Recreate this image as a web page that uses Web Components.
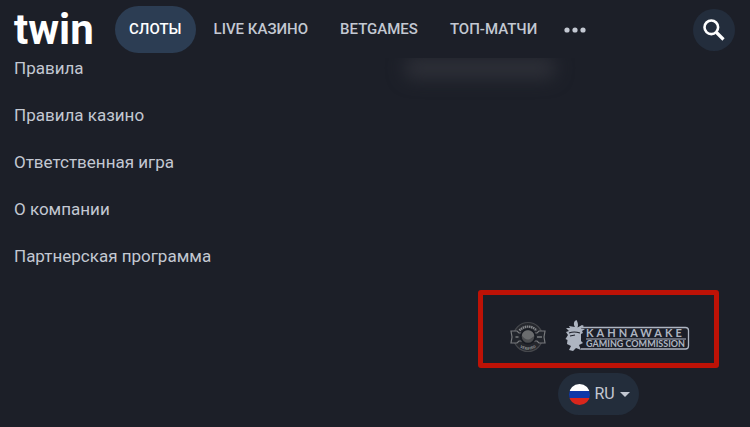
<!DOCTYPE html>
<html lang="ru">
<head>
<meta charset="utf-8">
<meta name="viewport" content="width=device-width, initial-scale=1">
<title>Twin</title>
<style>
    body {
        margin: 0;
        background: #1c1f28;
        color: #c3c8d2;
        font: 16px/20px Roboto, "Liberation Sans", sans-serif;
    }
</style>
</head>
<body>
<twin-header>
    <twin-logo slot="logo"></twin-logo>
    <nav-item active>СЛОТЫ</nav-item>
    <nav-item>LIVE КАЗИНО</nav-item>
    <nav-item>BETGAMES</nav-item>
    <nav-item>ТОП-МАТЧИ</nav-item>
</twin-header>
<twin-footer>
    <footer-link>Правила</footer-link>
    <footer-link>Правила казино</footer-link>
    <footer-link>Ответственная игра</footer-link>
    <footer-link>О компании</footer-link>
    <footer-link>Партнерская программа</footer-link>
    <license-box slot="license"></license-box>
    <lang-switch slot="license">RU</lang-switch>
</twin-footer>

<script>
class BaseElement extends HTMLElement {
    constructor() {
        super();

        const template = document.createElement('template');
        template.innerHTML = this.constructor.markup;

        this.attachShadow({ mode: 'open' });
        this.shadowRoot.appendChild(template.content.cloneNode(true));
    }
}

class TwinHeader extends BaseElement {
    static markup = `
<style>
    :host {
        display: flex;
        align-items: center;
        padding: 6px 15px 5px 14px;
    }
    nav {
        display: flex;
        align-items: center;
        gap: 4px;
        flex: 1;
        margin-left: 20px;
    }
    button {
        display: flex;
        align-items: center;
        justify-content: center;
        border: 0;
        padding: 0;
        background: none;
        color: inherit;
        cursor: pointer;
    }
    .more {
        width: 40px;
        height: 40px;
    }
    .search {
        width: 42px;
        height: 42px;
        border-radius: 50%;
        background: #232d3c;
        color: #fff;
    }
</style>
<slot name="logo"></slot>
<nav>
    <slot></slot>
    <button class="more" aria-label="Ещё">
        <svg width="22" height="6" viewBox="0 0 22 6" fill="currentColor">
            <circle cx="3" cy="3" r="2.6"/><circle cx="11" cy="3" r="2.6"/><circle cx="19" cy="3" r="2.6"/>
        </svg>
    </button>
</nav>
<button class="search" aria-label="Поиск">
    <svg width="24" height="24" viewBox="0 0 24 24" fill="none" stroke="currentColor">
        <circle cx="9.300" cy="9.300" r="6.800" stroke-width="2.600"/>
        <path d="M14.500 14.500l7 7" stroke-width="3.200"/>
    </svg>
</button>
`;
}

class TwinLogo extends BaseElement {
    static markup = `
<style>
    :host {
        display: block;
        width: 81px;
        height: 47px;
    }
    a {
        color: #fff;
        font-size: 42px;
        font-weight: 700;
        line-height: 47px;
        text-decoration: none;
    }
</style>
<a href="#">twin</a>
`;
}

class NavItem extends BaseElement {
    static markup = `
<style>
    :host {
        display: block;
    }
    a {
        display: block;
        padding: 0 14px;
        border-radius: 24px;
        font-size: 15px;
        font-weight: 500;
        line-height: 47px;
        white-space: nowrap;
        color: inherit;
        text-decoration: none;
    }
    :host([active]) a {
        background: #2c3d53;
        color: #fff;
    }
</style>
<a href="#"><slot></slot></a>
`;
}

class TwinFooter extends BaseElement {
    static markup = `
<style>
    :host {
        display: block;
        padding: 0 31px 12px 14px;
    }
    .columns {
        display: grid;
        grid-template-columns: 391fr 314fr;
        overflow: hidden;
    }
    nav {
        display: flex;
        flex-direction: column;
        align-items: flex-start;
        gap: 27px;
    }
    .contact {
        width: 150px;
        height: 20px;
        background: #2f3139;
        border-radius: 8px;
        filter: blur(9px);
    }
    .license {
        display: flex;
        flex-direction: column;
        align-items: center;
        gap: 5px;
        width: fit-content;
        margin: 24px 0 0 auto;
    }
</style>
<div class="columns">
    <nav><slot></slot></nav>
    <div class="contact"></div>
</div>
<div class="license"><slot name="license"></slot></div>
`;
}

class FooterLink extends BaseElement {
    static markup = `
<style>
    :host {
        display: block;
    }
    a {
        display: block;
        color: inherit;
        font-size: 17px;
        line-height: 20px;
        text-decoration: none;
    }
</style>
<a href="#"><slot></slot></a>
`;
}

class LicenseBox extends BaseElement {
    static markup = `
<style>
    :host {
        display: flex;
        align-items: flex-end;
        gap: 19px;
        padding: 25px 24px 9px 27px;
        border: 5px solid #bd1206;
        border-radius: 3px;
    }
    svg {
        display: block;
    }
    .seal text {
        font: 700 4px "Open Sans", sans-serif;
    }
    .name {
        font: 700 11px Lato, sans-serif;
        letter-spacing: 3px;
    }
    .kind {
        font: 700 9px Lato, sans-serif;
    }
</style>
<svg class="seal" width="36" height="34" viewBox="0 0 36 34">
    <circle cx="18" cy="17" r="14.5" fill="#25272d" stroke="#45474c" stroke-width="1.2"/>
    <path d="M9.5 10.5A11.2 11.2 0 0 1 26.500 10.500" fill="none" stroke="#85878b" stroke-width="2.4" stroke-dasharray="1.5 .6"/>
    <path d="M1 11H7L9 13H27L29 11H35L34 17L35 23H29L27 21H9L7 23H1L2 17Z" fill="#22252c" stroke="#77797c" stroke-width="1.2"/>
    <circle cx="18" cy="16.500" r="8" fill="#191c23"/>
    <circle cx="18" cy="16.500" r="6.300" fill="#4b4d50"/>
    <path d="M11.800 15.500A6.300 6.300 0 0 1 24.300 16L20 19Q16 21 11.800 15.500Z" fill="#77797b" opacity=".7"/>
    <path d="M5.500 17h3M27 17h5" stroke="#77797c" stroke-width="1.5"/>
    <path id="arc" d="M6 22A13 13 0 0 0 30 22" fill="none"/>
    <text fill="#8b8d91" text-anchor="middle"><textPath href="#arc" startOffset="50%">VERIFIED</textPath></text>
</svg>
<svg width="125" height="34" viewBox="0 0 125 34" fill="#aeb5c1">
    <path d="M17 7.500H120.500Q123.500 7.500 123.500 10.500V26Q123.500 29 120.500 29H16" fill="none" stroke="#aeb5c1" stroke-width="1.300"/>
    <path transform="translate(0 -1)" d="M10 8C8 5 9 2 11.500 1C13 4 13.500 6 12.500 8.500L17 6L19 7L16 9.500L20 10L17 12L18 14L16 15L16 22L18 24L14 26L16 31L11 29L8 32L4 31L6 27L2 25L2.500 21L.500 20L3 16L1 13L4 12L1 9L5 9L4 7Z"/>
    <path d="M4 13Q9 11 15 13M5 16l5-1" fill="none" stroke="#1c1f28" stroke-width="1.100"/>
    <path d="M21 19H121" stroke="#aeb5c1"/>
    <text class="name" x="21" y="17">KAHNAWAKE</text>
    <text class="kind" x="21" y="27">GAMING COMMISSION</text>
</svg>
`;
}

class LangSwitch extends BaseElement {
    static markup = `
<style>
    :host {
        display: block;
    }
    button {
        display: flex;
        align-items: center;
        gap: 4px;
        height: 42px;
        padding: 0 9px 0 11px;
        border: 0;
        border-radius: 21px;
        background: #232d3b;
        color: inherit;
        font: inherit;
        cursor: pointer;
    }
    .flag {
        width: 21px;
        height: 21px;
        border-radius: 50%;
        background: linear-gradient(#fff 33%, #0d38a8 33% 66%, #d8261c 66%);
    }
    svg {
        margin-left: 1px;
    }
</style>
<button aria-label="Язык">
    <span class="flag"></span>
    <slot></slot>
    <svg width="10" height="5" viewBox="0 0 10 5" fill="currentColor"><path d="M0 0h10L5 5z"/></svg>
</button>
`;
}

customElements.define("twin-header", TwinHeader, { });
customElements.define("twin-logo", TwinLogo, { });
customElements.define("nav-item", NavItem, { });
customElements.define("twin-footer", TwinFooter, { });
customElements.define("footer-link", FooterLink, { });
customElements.define("license-box", LicenseBox, { });
customElements.define("lang-switch", LangSwitch, { });
</script>
</body>
</html>
